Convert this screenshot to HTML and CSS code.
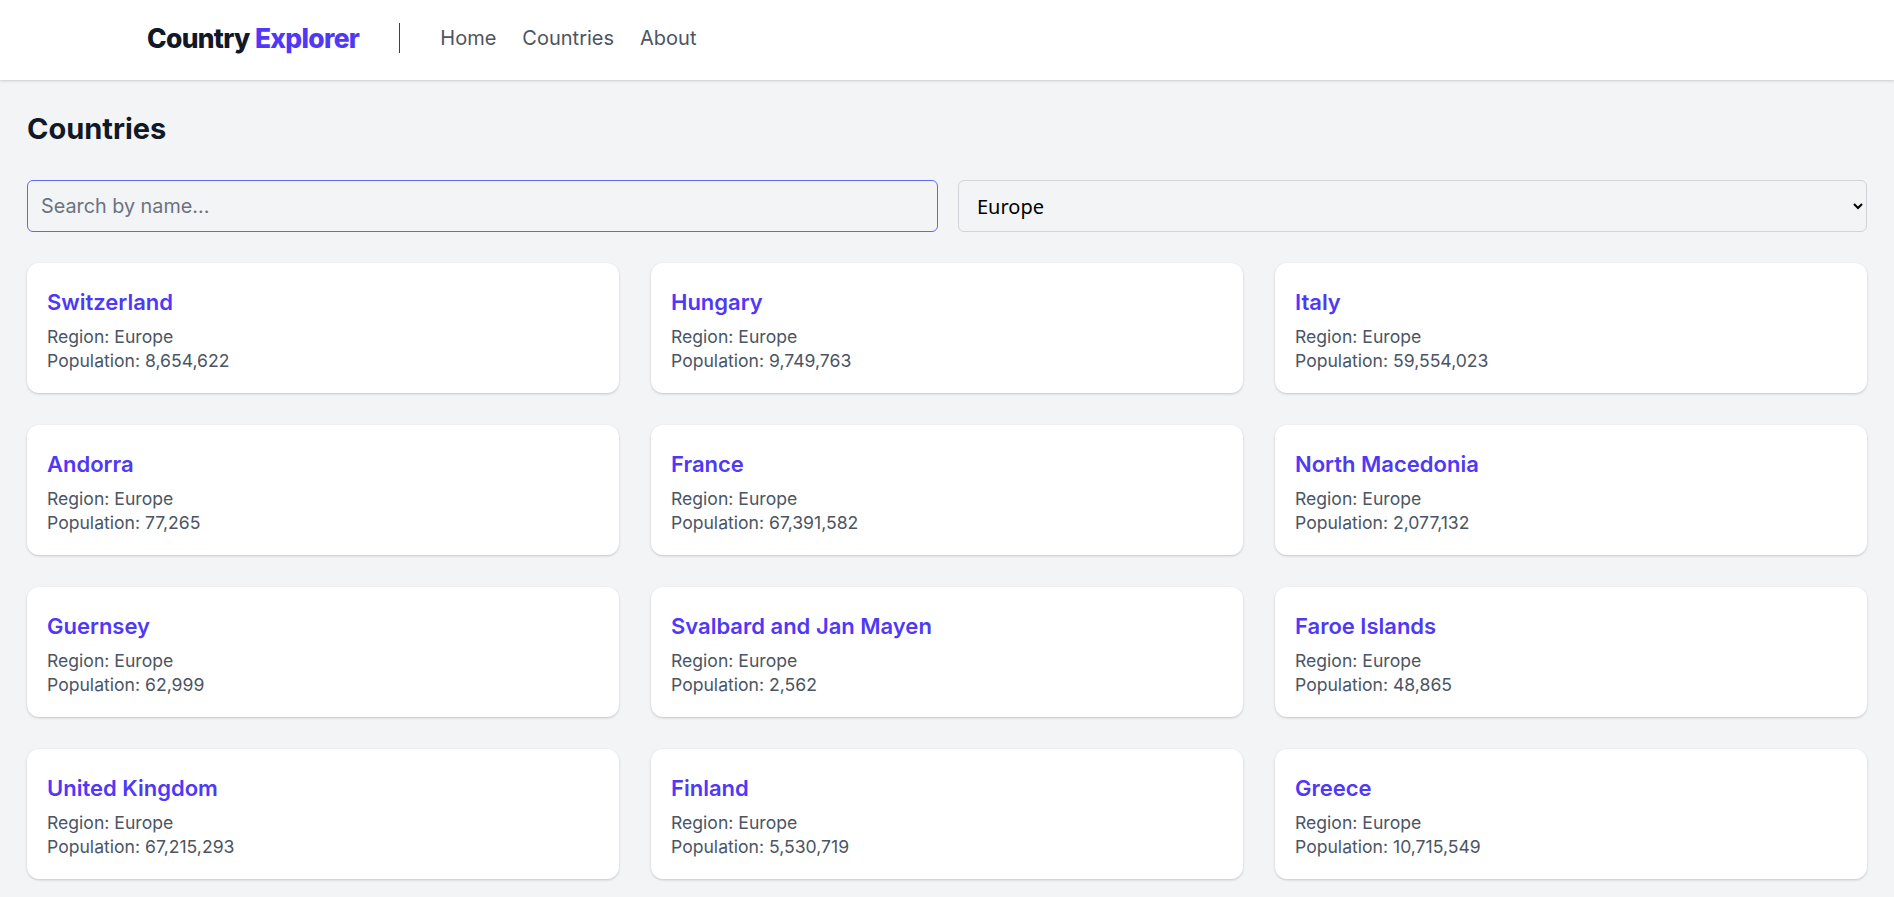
FILE: index.html
```html
<!DOCTYPE html>
<html lang="en">
<head>
<meta charset="utf-8">
<title>Country Explorer</title>
<link rel="stylesheet" href="styles.css">
</head>
<body>
<header class="site-header">
  <div class="header-inner">
    <a class="logo" href="#">Country <span class="logo-accent">Explorer</span></a>
    <span class="divider"></span>
    <nav class="nav">
      <a href="#">Home</a>
      <a href="#">Countries</a>
      <a href="#">About</a>
    </nav>
  </div>
</header>
<main class="main">
  <h1 class="page-title">Countries</h1>
  <div class="filters">
    <input class="search" type="text" placeholder="Search by name..." autofocus>
    <select class="region-select">
      <option>All regions</option>
      <option>Africa</option>
      <option>Americas</option>
      <option>Asia</option>
      <option selected>Europe</option>
      <option>Oceania</option>
    </select>
  </div>
  <div class="grid">
    <div class="card"><h2 class="card-title">Switzerland</h2><p class="card-line">Region: Europe</p><p class="card-line">Population: 8,654,622</p></div>
    <div class="card"><h2 class="card-title">Hungary</h2><p class="card-line">Region: Europe</p><p class="card-line">Population: 9,749,763</p></div>
    <div class="card"><h2 class="card-title">Italy</h2><p class="card-line">Region: Europe</p><p class="card-line">Population: 59,554,023</p></div>
    <div class="card"><h2 class="card-title">Andorra</h2><p class="card-line">Region: Europe</p><p class="card-line">Population: 77,265</p></div>
    <div class="card"><h2 class="card-title">France</h2><p class="card-line">Region: Europe</p><p class="card-line">Population: 67,391,582</p></div>
    <div class="card"><h2 class="card-title">North Macedonia</h2><p class="card-line">Region: Europe</p><p class="card-line">Population: 2,077,132</p></div>
    <div class="card"><h2 class="card-title">Guernsey</h2><p class="card-line">Region: Europe</p><p class="card-line">Population: 62,999</p></div>
    <div class="card"><h2 class="card-title">Svalbard and Jan Mayen</h2><p class="card-line">Region: Europe</p><p class="card-line">Population: 2,562</p></div>
    <div class="card"><h2 class="card-title">Faroe Islands</h2><p class="card-line">Region: Europe</p><p class="card-line">Population: 48,865</p></div>
    <div class="card"><h2 class="card-title">United Kingdom</h2><p class="card-line">Region: Europe</p><p class="card-line">Population: 67,215,293</p></div>
    <div class="card"><h2 class="card-title">Finland</h2><p class="card-line">Region: Europe</p><p class="card-line">Population: 5,530,719</p></div>
    <div class="card"><h2 class="card-title">Greece</h2><p class="card-line">Region: Europe</p><p class="card-line">Population: 10,715,549</p></div>
  </div>
</main>
</body>
</html>
```

FILE: styles.css
```css
* { box-sizing: border-box; }

html, body {
  margin: 0;
  padding: 0;
}

body {
  background: #f3f4f6;
  font-family: Inter, "Noto Sans", sans-serif;
  color: #111827;
}

.site-header {
  background: #ffffff;
  height: 80px;
  box-shadow: 0 1px 3px rgba(0, 0, 0, 0.12), 0 1px 2px rgba(0, 0, 0, 0.06);
  position: relative;
  z-index: 1;
}

.header-inner {
  max-width: 1600px;
  margin: 0 auto;
  height: 100%;
  padding-bottom: 5px;
  display: flex;
  align-items: center;
  gap: 40px;
}

.logo {
  font-size: 26.4px;
  font-weight: 800;
  letter-spacing: -0.025em;
  color: #111827;
  text-decoration: none;
}

.logo-accent {
  color: #4f39f6;
}

.divider {
  width: 1px;
  height: 30px;
  background: #374151;
}

.nav {
  display: flex;
  gap: 26px;
}

.nav a {
  font-size: 20px;
  color: #4b5563;
  text-decoration: none;
}

.main {
  padding: 31px 27px 40px;
}

.page-title {
  margin: 0 0 33px;
  font-size: 29px;
  line-height: 36px;
  font-weight: 700;
  color: #111827;
}

.filters {
  display: flex;
  gap: 20px;
  margin-bottom: 31px;
}

.search,
.region-select {
  flex: 1 1 0;
  min-width: 0;
  height: 52px;
  border-radius: 6px;
  background: transparent;
}

.search {
  border: 1px solid #6366f1;
  padding: 0 13px;
  font-family: Inter, sans-serif;
  font-size: 19.8px;
  color: #111827;
  outline: none;
}

.search::placeholder {
  color: #6b7280;
}

.region-select {
  border: 1px solid #d1d5db;
  padding: 0 10px 0 14px;
  font-family: "Noto Sans", "Open Sans", sans-serif;
  font-size: 20px;
  color: #000000;
}

.grid {
  display: grid;
  grid-template-columns: repeat(3, 1fr);
  gap: 32px;
}

.card {
  background: #ffffff;
  border-radius: 12px;
  padding: 25px 20px 20px;
  height: 130px;
  box-shadow: 0 1px 3px rgba(0, 0, 0, 0.12), 0 1px 2px rgba(0, 0, 0, 0.08);
}

.card-title {
  margin: 0 0 9px;
  font-size: 22px;
  line-height: 28px;
  font-weight: 600;
  color: #4f39f6;
}

.card-line {
  margin: 0;
  font-size: 17.6px;
  line-height: 24px;
  color: #4b5563;
}
```
